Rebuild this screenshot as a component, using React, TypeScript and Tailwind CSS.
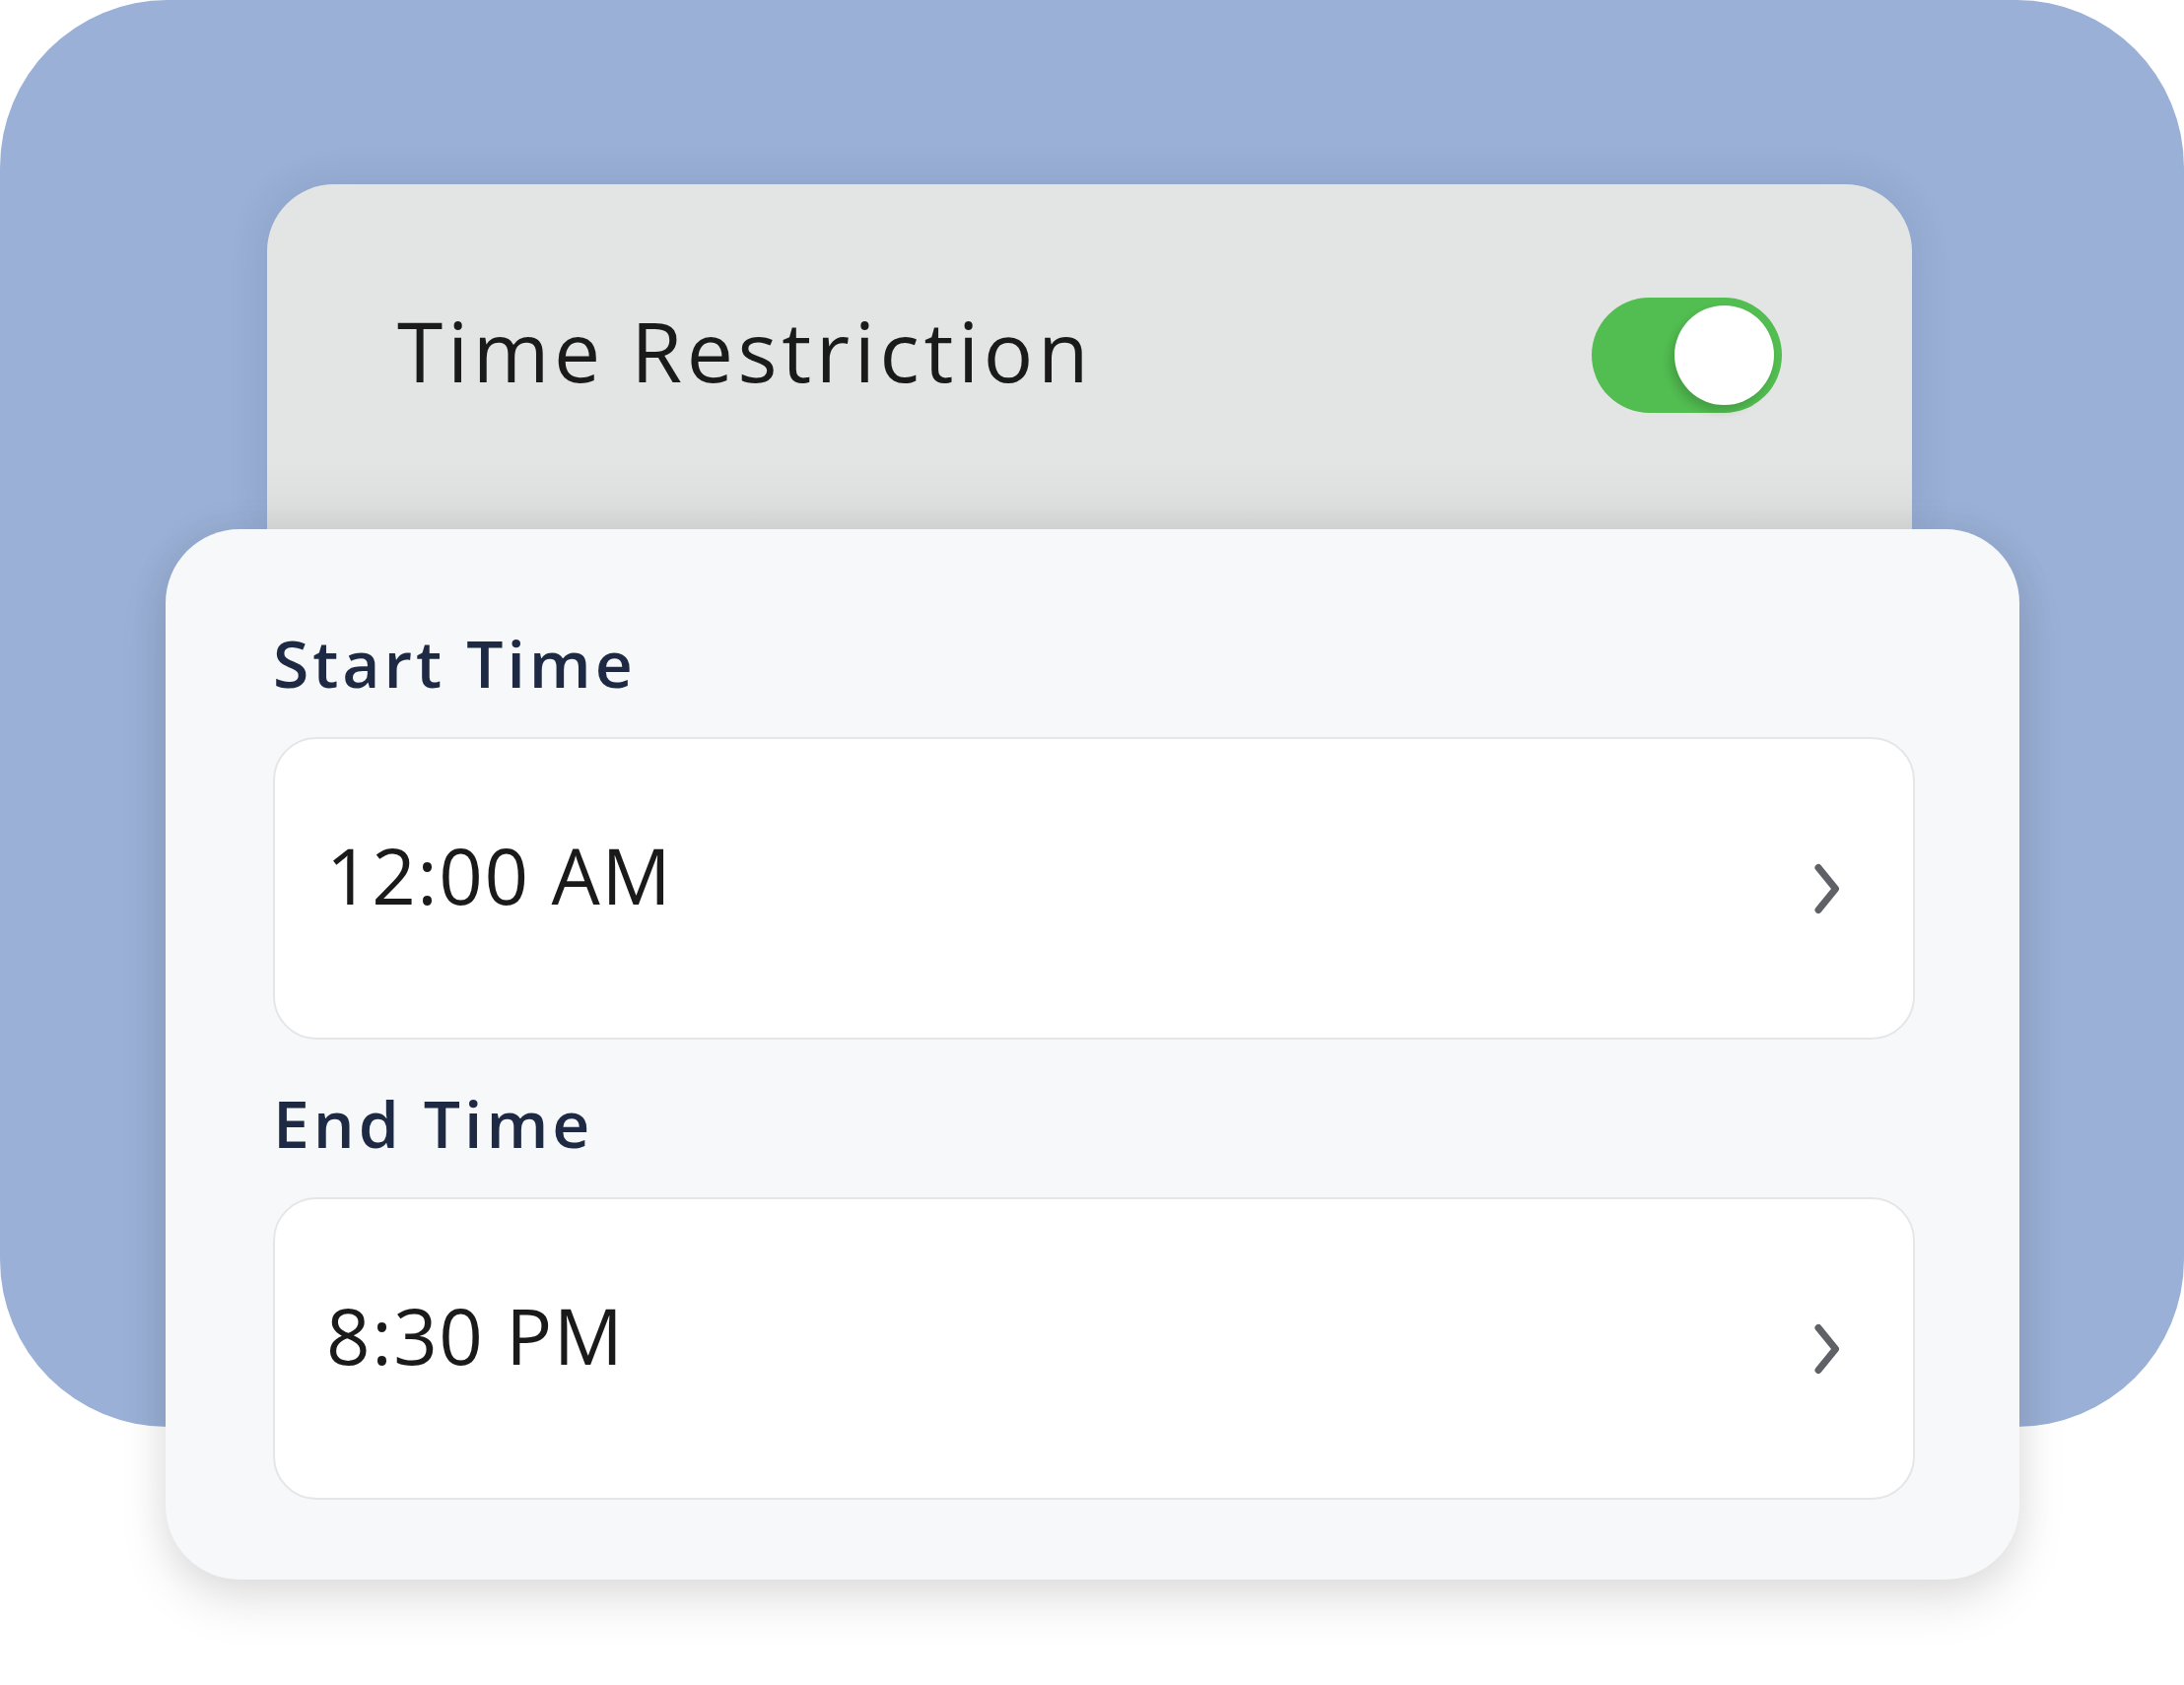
import React from "react"

function Toggle() {
  return (
    <div className="flex h-[117px] w-[193px] items-center justify-end rounded-full bg-[#52BD50] p-[8px]">
      <div className="h-[101px] w-[101px] rounded-full bg-white shadow-[-4px_6px_10px_rgba(0,0,0,0.16)]" />
    </div>
  )
}

function Chevron() {
  return (
    <svg width="26" height="52" viewBox="0 0 26 52" fill="none" className="shrink-0">
      <path
        d="M4 4.5 L21.5 26 L4 47.5"
        stroke="#5F6166"
        strokeWidth="7"
        strokeLinecap="round"
        strokeLinejoin="round"
      />
    </svg>
  )
}

function TimeField({ label, value }: { label: string; value: string }) {
  return (
    <div className="flex flex-col">
      <span className="text-[66px] leading-none font-semibold tracking-[0.06em] text-[#1E2A44]">
        {label}
      </span>
      <div className="mt-[43px] flex h-[307px] items-center justify-between rounded-[44px] border-2 border-[#E4E6E8] bg-white pl-[52px] pr-[74px]">
        <span className="pb-[28px] text-[78px] leading-none font-medium tracking-[0.02em] text-[#1A1A1A]">
          {value}
        </span>
        <Chevron />
      </div>
    </div>
  )
}

export default function App() {
  return (
    <div className="h-[1710px] w-[2216px] overflow-hidden bg-white font-['Open_Sans','Lato',sans-serif] [font-variant-ligatures:none]">
      {/* Blue backdrop */}
      <div className="flex h-[1448px] flex-col items-start rounded-[170px] bg-[#9AB0D6] pt-[187px]">
        {/* Toggle card */}
        <div className="ml-[271px] h-[350px] w-[1669px] shrink-0 rounded-t-[68px] bg-linear-to-b from-[#E3E5E4] from-80% to-[#DADCDB] shadow-[0_0_40px_rgba(40,60,100,0.14)]">
          <div className="flex h-full items-center justify-between px-[132px] pb-[4px]">
            <span className="pb-[9px] text-[84px] leading-none tracking-[0.055em] text-[#1A1A1A]">
              Time Restriction
            </span>
            <Toggle />
          </div>
        </div>

        {/* Time card */}
        <div className="relative z-10 ml-[168px] w-[1881px] shrink-0 rounded-[75px] bg-[#F6F8FA] pt-[102px] pr-[106px] pb-[81px] pl-[109px] shadow-[0_24px_50px_rgba(0,0,0,0.1),0_0_40px_rgba(0,0,0,0.07)]">
          <TimeField label="Start Time" value="12:00 AM" />
          <div className="mt-[51px]">
            <TimeField label="End Time" value="8:30 PM" />
          </div>
        </div>
      </div>
    </div>
  )
}
